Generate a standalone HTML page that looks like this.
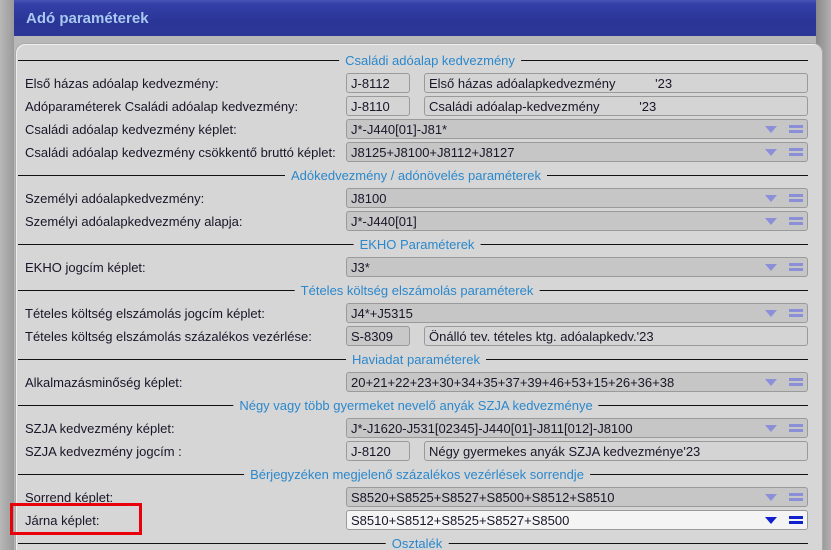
<!DOCTYPE html>
<html><head><meta charset="utf-8"><style>
*{margin:0;padding:0;box-sizing:border-box}
html,body{width:831px;height:550px;overflow:hidden}
body{background:#a9a9a9;font-family:"Liberation Sans","DejaVu Sans",sans-serif;font-size:13px;color:#1a1528;position:relative}
.title{position:absolute;left:14px;top:0;width:802px;height:36px;background:linear-gradient(#4a55b8 0,#3340a8 4px,#2a3596 60%,#2c3898);color:#a9c8f0;font-weight:bold;font-size:15px;padding:10px 0 0 12px}
.ledge{position:absolute;left:0;top:0;width:14px;height:550px;background:linear-gradient(90deg,#b8b8b8,#9a9a9a)}
.redge{position:absolute;left:816px;top:0;width:15px;height:550px;background:linear-gradient(90deg,#8a8a8a,#b0b0b0)}
.frame{position:absolute;left:8px;top:36px;width:815px;height:514px;background:#b8b8b8}
.panel{position:absolute;left:15px;top:43px;width:808px;height:507px;background:#d6d6d6;border:1px solid #aaa;border-bottom:none;border-radius:10px 10px 0 0;box-shadow:inset 1px 1px 0 #eee}
.sec{position:absolute;left:18px;width:790px;height:1px;background:#111}
.st{position:absolute;transform:translateX(-50%);background:#d6d6d6;color:#2b88cc;padding:0 6px;white-space:nowrap;line-height:15px}
.lb{position:absolute;left:25px;white-space:nowrap;line-height:16px;top:0}
.bx{position:absolute;height:20px;border:1px solid #9a9a9a;border-radius:3px;background:#d4d4d4;padding:1px 0 0 4px;white-space:nowrap;line-height:17px}
.cb{background:#c6c6c6;left:346px;width:462px}
.cb.w{background:#f4f4f4}
.ar{position:absolute;right:30px;top:6px;width:0;height:0;border-left:6px solid transparent;border-right:6px solid transparent;border-top:7px solid #8a8fd8}
.eq{position:absolute;right:4px;top:5px;width:14px;height:3px;background:#8a8fd8}
.eq2{position:absolute;right:4px;top:10px;width:14px;height:3px;background:#8a8fd8}
.w .ar{border-top-color:#1020d0}.w .eq,.w .eq2{background:#1020d0}
</style></head><body>
<div class="frame"></div>
<div class="ledge"></div><div class="redge"></div>
<div class="title">Adó paraméterek</div>
<div class="panel"></div>

<div class="sec" style="top:60px"></div><div class="st" style="left:430px;top:53px">Családi adóalap kedvezmény</div>
<div class="lb" style="top:76px">Első házas adóalap kedvezmény:</div>
<div class="bx" style="left:346px;top:73px;width:64px">J-8112</div>
<div class="bx" style="left:424px;top:73px;width:384px">Első házas adóalapkedvezmény&nbsp;&nbsp;&nbsp;&nbsp;&nbsp;&nbsp;&nbsp;&nbsp;&nbsp;&nbsp;&nbsp;'23</div>
<div class="lb" style="top:99px">Adóparaméterek Családi adóalap kedvezmény:</div>
<div class="bx" style="left:346px;top:96px;width:64px">J-8110</div>
<div class="bx" style="left:424px;top:96px;width:384px">Családi adóalap-kedvezmény&nbsp;&nbsp;&nbsp;&nbsp;&nbsp;&nbsp;&nbsp;&nbsp;&nbsp;&nbsp;&nbsp;'23</div>
<div class="lb" style="top:122px">Családi adóalap kedvezmény képlet:</div>
<div class="bx cb" style="top:119px">J*-J440[01]-J81*<i class="ar"></i><i class="eq"></i><i class="eq2"></i></div>
<div class="lb" style="top:145px">Családi adóalap kedvezmény csökkentő bruttó képlet:</div>
<div class="bx cb" style="top:142px">J8125+J8100+J8112+J8127<i class="ar"></i><i class="eq"></i><i class="eq2"></i></div>

<div class="sec" style="top:175px"></div><div class="st" style="left:416px;top:168px">Adókedvezmény / adónövelés paraméterek</div>
<div class="lb" style="top:191px">Személyi adóalapkedvezmény:</div>
<div class="bx cb" style="top:188px">J8100<i class="ar"></i><i class="eq"></i><i class="eq2"></i></div>
<div class="lb" style="top:214px">Személyi adóalapkedvezmény alapja:</div>
<div class="bx cb" style="top:211px">J*-J440[01]<i class="ar"></i><i class="eq"></i><i class="eq2"></i></div>

<div class="sec" style="top:244px"></div><div class="st" style="left:417px;top:237px">EKHO Paraméterek</div>
<div class="lb" style="top:260px">EKHO jogcím képlet:</div>
<div class="bx cb" style="top:257px">J3*<i class="ar"></i><i class="eq"></i><i class="eq2"></i></div>

<div class="sec" style="top:290px"></div><div class="st" style="left:417px;top:283px">Tételes költség elszámolás paraméterek</div>
<div class="lb" style="top:306px">Tételes költség elszámolás jogcím képlet:</div>
<div class="bx cb" style="top:303px">J4*+J5315<i class="ar"></i><i class="eq"></i><i class="eq2"></i></div>
<div class="lb" style="top:329px">Tételes költség elszámolás százalékos vezérlése:</div>
<div class="bx" style="left:346px;top:326px;width:64px;background:#c8c8c8">S-8309</div>
<div class="bx" style="left:424px;top:326px;width:384px">Önálló tev. tételes ktg. adóalapkedv.'23</div>

<div class="sec" style="top:359px"></div><div class="st" style="left:416px;top:352px">Haviadat paraméterek</div>
<div class="lb" style="top:375px">Alkalmazásminőség képlet:</div>
<div class="bx cb" style="top:372px">20+21+22+23+30+34+35+37+39+46+53+15+26+36+38<i class="ar"></i><i class="eq"></i><i class="eq2"></i></div>

<div class="sec" style="top:405px"></div><div class="st" style="left:416px;top:398px">Négy vagy több gyermeket nevelő anyák SZJA kedvezménye</div>
<div class="lb" style="top:421px">SZJA kedvezmény képlet:</div>
<div class="bx cb" style="top:418px">J*-J1620-J531[02345]-J440[01]-J811[012]-J8100<i class="ar"></i><i class="eq"></i><i class="eq2"></i></div>
<div class="lb" style="top:444px">SZJA kedvezmény jogcím :</div>
<div class="bx" style="left:346px;top:441px;width:64px">J-8120</div>
<div class="bx" style="left:424px;top:441px;width:384px">Négy gyermekes anyák SZJA kedvezménye'23</div>

<div class="sec" style="top:474px"></div><div class="st" style="left:417px;top:467px">Bérjegyzéken megjelenő százalékos vezérlések sorrendje</div>
<div class="lb" style="top:490px">Sorrend képlet:</div>
<div class="bx cb" style="top:487px">S8520+S8525+S8527+S8500+S8512+S8510<i class="ar"></i><i class="eq"></i><i class="eq2"></i></div>
<div class="lb" style="top:513px">Járna képlet:</div>
<div class="bx cb w" style="top:510px">S8510+S8512+S8525+S8527+S8500<i class="ar"></i><i class="eq"></i><i class="eq2"></i></div>
<div style="position:absolute;left:10px;top:503px;width:132px;height:32px;border:3px solid #e8000a"></div>

<div class="sec" style="top:543px"></div><div class="st" style="left:417px;top:536px">Osztalék</div>
</body></html>
